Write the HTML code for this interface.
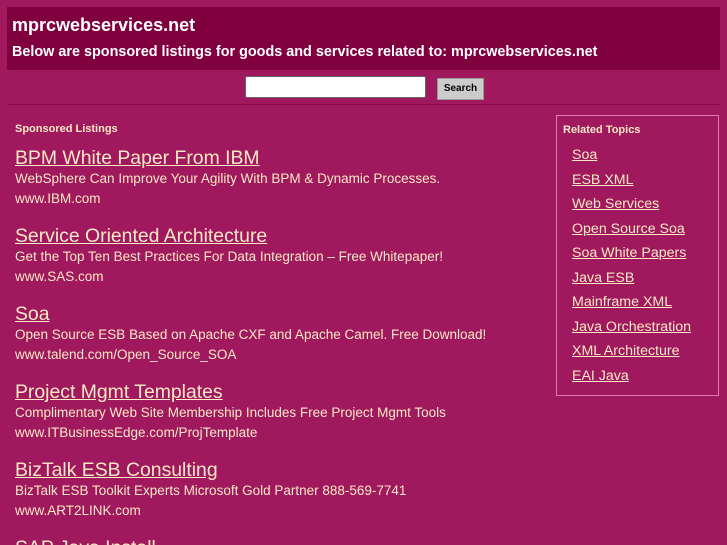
<!DOCTYPE html>
<html><head><style>
html,body{margin:0;height:545px;overflow:hidden}
body{background:#a0195e;font-family:"Liberation Sans",sans-serif;color:#f8e8c4;width:727px;position:relative}
.hdr{position:absolute;left:7px;top:7px;width:713px;height:63px;background:#80003f}
.hdr h1{position:absolute;left:5px;top:8px;margin:0;font-size:18px;font-weight:bold;color:#fff}
.hdr h2{position:absolute;left:5px;top:37px;margin:0;font-size:14.4px;font-weight:bold;color:#fff}
.inp{position:absolute;left:245px;top:76px;width:179px;height:20px;background:#fff;border:1px solid #666;border-radius:2px}
.btn{position:absolute;left:437px;top:78px;width:45px;height:20px;background:#ccc;border:1px solid #999;font-size:10px;font-weight:bold;color:#000;text-align:center;line-height:20px}
.sep{position:absolute;left:7px;top:104px;width:713px;height:1px;background:#860a48}
.sl{position:absolute;left:15px;top:123px;font-size:11px;font-weight:bold}
.ad{position:absolute;left:15px}
.ad a{display:block;font-size:19.4px;color:#f8e8c4;text-decoration:underline;line-height:22px}
.ad div{font-size:13.5px;line-height:20px}
.side{position:absolute;left:556px;top:115px;width:161px;height:279px;border:1px solid #e07ab0}
.side b{position:absolute;left:6px;top:8px;font-size:11px}
.side a{position:absolute;left:15px;font-size:14.2px;color:#f8e8c4;text-decoration:underline}
</style></head><body>
<div class="hdr"><h1>mprcwebservices.net</h1><h2>Below are sponsored listings for goods and services related to: mprcwebservices.net</h2></div>
<div class="inp"></div><div class="btn">Search</div>
<div class="sep"></div>
<div class="sl">Sponsored Listings</div>
<div class="ad" style="top:147px"><a>BPM White Paper From IBM</a><div>WebSphere Can Improve Your Agility With BPM &amp; Dynamic Processes.</div><div>www.IBM.com</div></div>
<div class="ad" style="top:225px"><a>Service Oriented Architecture</a><div>Get the Top Ten Best Practices For Data Integration – Free Whitepaper!</div><div>www.SAS.com</div></div>
<div class="ad" style="top:303px"><a>Soa</a><div>Open Source ESB Based on Apache CXF and Apache Camel. Free Download!</div><div>www.talend.com/Open_Source_SOA</div></div>
<div class="ad" style="top:381px"><a>Project Mgmt Templates</a><div>Complimentary Web Site Membership Includes Free Project Mgmt Tools</div><div>www.ITBusinessEdge.com/ProjTemplate</div></div>
<div class="ad" style="top:459px"><a>BizTalk ESB Consulting</a><div>BizTalk ESB Toolkit Experts Microsoft Gold Partner 888-569-7741</div><div>www.ART2LINK.com</div></div>
<div class="ad" style="top:537px"><a>SAP Java Install</a></div>
<div class="side"><b>Related Topics</b>
<a style="top:31px">Soa</a><a style="top:56px">ESB XML</a><a style="top:80px">Web Services</a><a style="top:105px">Open Source Soa</a><a style="top:129px">Soa White Papers</a><a style="top:154px">Java ESB</a><a style="top:178px">Mainframe XML</a><a style="top:203px">Java Orchestration</a><a style="top:227px">XML Architecture</a><a style="top:252px">EAI Java</a>
</div>
</body></html>
